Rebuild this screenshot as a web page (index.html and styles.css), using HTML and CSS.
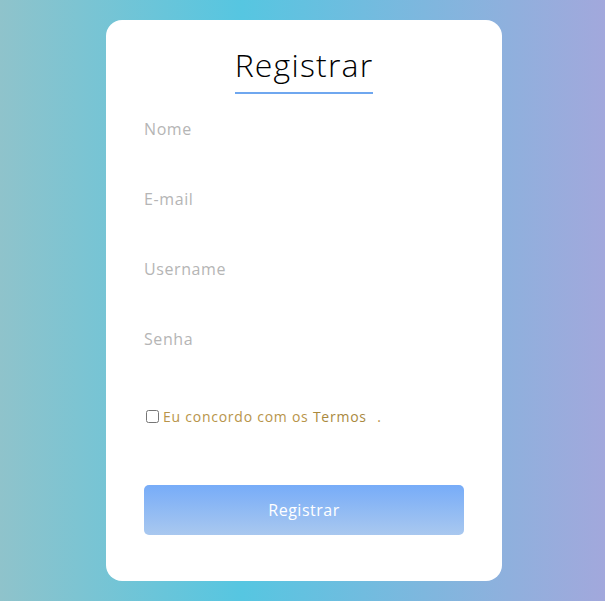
FILE: index.html
```html
<!DOCTYPE html>
<html lang="pt">
<head>
<meta charset="utf-8">
<title>Registrar</title>
<link rel="stylesheet" href="styles.css">
</head>
<body>
<main class="page">
  <form class="card">
    <h1 class="title">Registrar</h1>
    <div class="field"><input type="text" placeholder="Nome"></div>
    <div class="field"><input type="email" placeholder="E-mail"></div>
    <div class="field"><input type="text" placeholder="Username"></div>
    <div class="field"><input type="password" placeholder="Senha"></div>
    <label class="terms"><input type="checkbox"><span>Eu concordo com os <a href="#" class="terms-link">Termos</a> <span class="dot">.</span></span></label>
    <button type="button" class="submit">Registrar</button>
  </form>
</main>
</body>
</html>
```
FILE: styles.css
```css
* { box-sizing: border-box; }
html, body { margin: 0; padding: 0; }
body {
  font-family: "Open Sans", "Noto Sans", sans-serif;
  background: linear-gradient(to right, #8fc3cb 0%, #56c6e1 40%, #7eb7de 70%, #a2a8dc 100%);
  min-height: 601px;
}
.page {
  min-height: 601px;
  display: flex;
  align-items: center;
  justify-content: center;
  padding-left: 3px;
}
.card {
  width: 396px;
  background: #fff;
  border-radius: 16px;
  padding: 25px 38px 46px;
  display: flex;
  flex-direction: column;
}
.title {
  align-self: center;
  margin: 0;
  font-size: 32px;
  line-height: 40px;
  font-weight: 300;
  letter-spacing: 1.2px;
  color: #000;
  padding-bottom: 7px;
  border-bottom: 2px solid #6fa7ef;
}
.field {
  height: 70px;
  display: flex;
  align-items: center;
}
.field input {
  width: 100%;
  border: none;
  outline: none;
  padding: 0;
  font-family: inherit;
  font-size: 16px;
  letter-spacing: 0.6px;
  color: #333;
  background: transparent;
}
.field input::placeholder { color: #b5b5b5; }
.terms {
  margin-top: 30px;
  height: 24px;
  display: flex;
  align-items: center;
  font-size: 14px;
  letter-spacing: 0.75px;
  color: #b8944a;
}
.terms input {
  margin: 0 4px 0 2px;
  width: 13px;
  height: 13px;
}
.terms-link {
  color: #aa893e;
  text-decoration: none;
  font-weight: 500;
}
.dot { margin-left: 6px; }
.submit {
  margin-top: 57px;
  height: 50px;
  border: none;
  border-radius: 5px;
  background: linear-gradient(to bottom, #77acf8, #a9c8ef);
  color: #fff;
  font-family: inherit;
  font-size: 16px;
  letter-spacing: 0.5px;
  cursor: pointer;
}
```
